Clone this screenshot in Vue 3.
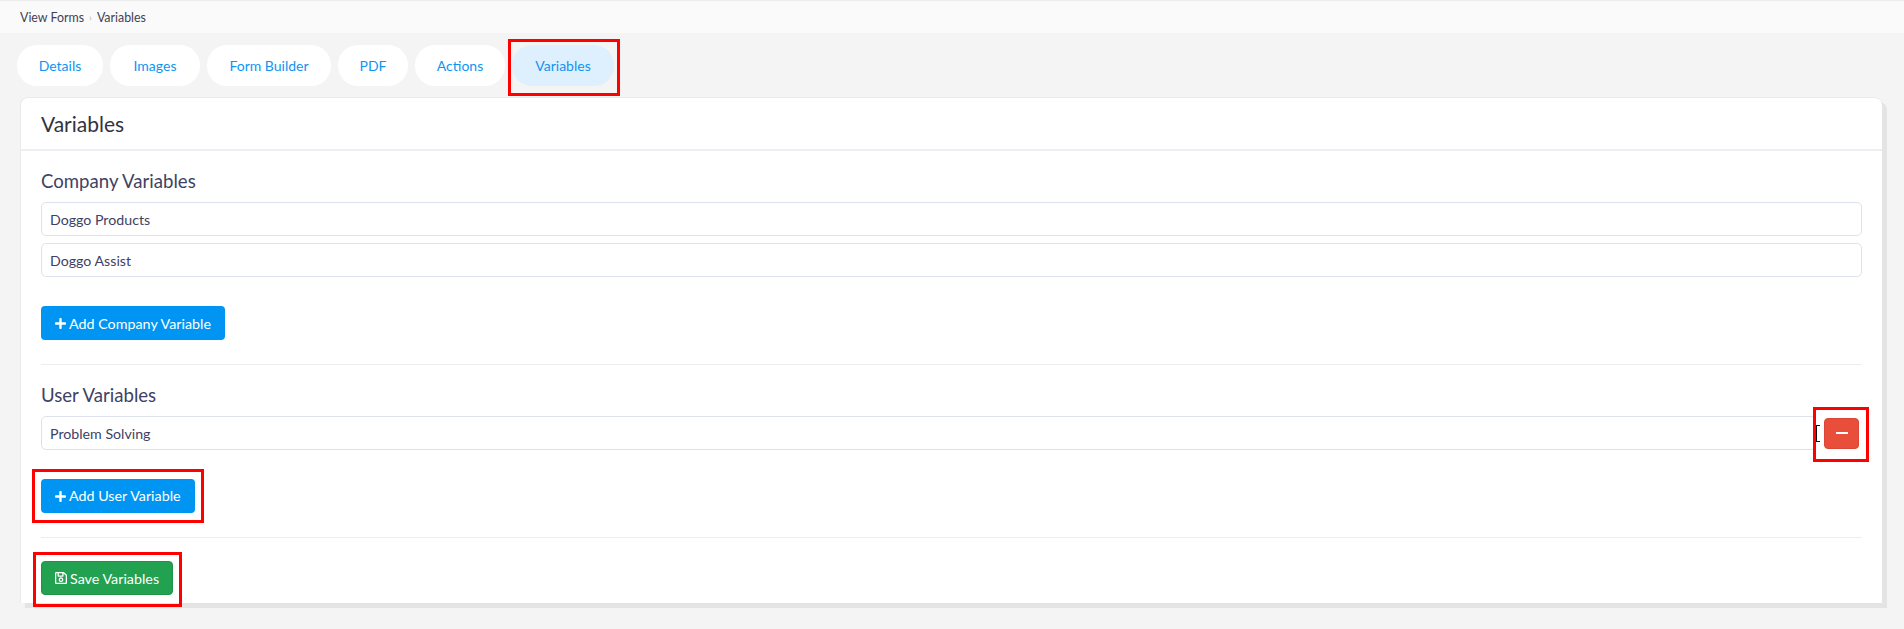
<template>
  <div class="page">
    <div class="crumbs">
      <span>View Forms</span>
      <span class="sep">›</span>
      <span>Variables</span>
    </div>

    <div class="tabs">
      <a
        v-for="tab in tabs"
        :key="tab"
        class="tab"
        :class="{ active: tab === 'Variables', marked: tab === 'Variables' }"
      >{{ tab }}</a>
    </div>

    <div class="card">
      <div class="card-head">Variables</div>
      <div class="card-body">
        <h5 class="group-title">Company Variables</h5>
        <div class="field" v-for="item in companyVars" :key="item">
          <div class="input">{{ item }}</div>
        </div>
        <button class="btn blue company-add">
          <svg class="ico" viewBox="0 32 448 448"><path d="M416 208H272V64c0-17.700-14.300-32-32-32h-32c-17.700 0-32 14.300-32 32v144H32c-17.700 0-32 14.300-32 32v32c0 17.700 14.300 32 32 32h144v144c0 17.700 14.300 32 32 32h32c17.700 0 32-14.300 32-32V304h144c17.700 0 32-14.300 32-32v-32c0-17.700-14.300-32-32-32z" /></svg>
          Add Company Variable
        </button>
        <hr class="rule first" />

        <h5 class="group-title">User Variables</h5>
        <div class="user-row">
          <div class="input grow">Problem Solving</div>
          <span class="remove-wrap marked">
            <span class="caret"></span>
            <button class="btn-remove"><span class="minus"></span></button>
          </span>
        </div>
        <div class="add-user">
          <span class="marked mark-add">
            <button class="btn blue">
              <svg class="ico" viewBox="0 32 448 448"><path d="M416 208H272V64c0-17.700-14.300-32-32-32h-32c-17.700 0-32 14.300-32 32v144H32c-17.700 0-32 14.300-32 32v32c0 17.700 14.300 32 32 32h144v144c0 17.700 14.300 32 32 32h32c17.700 0 32-14.300 32-32V304h144c17.700 0 32-14.300 32-32v-32c0-17.700-14.300-32-32-32z" /></svg>
              Add User Variable
            </button>
          </span>
        </div>
        <hr class="rule second" />

        <span class="marked mark-save">
          <button class="btn green">
            <svg class="ico save" viewBox="0 32 448 448"><path d="M433.900 129.900l-83.900-83.900A48 48 0 0 0 316.100 32H48C21.500 32 0 53.500 0 80v352c0 26.500 21.500 48 48 48h352c26.500 0 48-21.500 48-48V163.900a48 48 0 0 0-14.100-34zM272 80v80H144V80h128zm122 352H54a6 6 0 0 1-6-6V86a6 6 0 0 1 6-6h42v104c0 13.300 10.700 24 24 24h176c13.300 0 24-10.700 24-24V83.900l78.200 78.200a6 6 0 0 1 1.800 4.200V426a6 6 0 0 1-6 6zM224 232c-48.500 0-88 39.500-88 88s39.500 88 88 88 88-39.500 88-88-39.500-88-88-88zm0 128c-22.100 0-40-17.900-40-40s17.900-40 40-40 40 17.900 40 40-17.900 40-40 40z" /></svg>
            Save Variables
          </button>
        </span>
      </div>
    </div>
  </div>
</template>

<script setup>
const tabs = ['Details', 'Images', 'Form Builder', 'PDF', 'Actions', 'Variables']
const companyVars = ['Doggo Products', 'Doggo Assist']
</script>

<style>
body {
  background: #f4f4f4;
}
</style>

<style scoped>
.page {
  min-height: 629px;
  box-sizing: border-box;
  background: #f4f4f4;
  font-family: Lato, "Open Sans", sans-serif;
  color: #3e4265;
  font-size: 14px;
}

.crumbs {
  display: flex;
  align-items: center;
  gap: 5px;
  height: 32px;
  padding-left: 20px;
  background: #fafafa;
  border-top: 1px solid #ececec;
  font-size: 12.400px;
  color: #3f4254;
}

.sep {
  color: #b5b5c3;
  font-size: 10px;
}

.tabs {
  display: flex;
  gap: 7px;
  padding: 12px 0 0 17px;
}

.tab {
  display: flex;
  align-items: center;
  justify-content: center;
  height: 41px;
  border-radius: 20px;
  background: #fff;
  color: #0d95f3;
  font-size: 14px;
}

.tab:nth-child(1) { width: 86px; }
.tab:nth-child(2) { width: 90px; }
.tab:nth-child(3) { width: 124px; }
.tab:nth-child(4) { width: 70px; }
.tab:nth-child(5) { width: 90px; }
.tab:nth-child(6) { width: 102px; }

.tab.active {
  background: #def0fd;
}

.marked {
  position: relative;
}

.marked::after {
  content: "";
  position: absolute;
  border: 3px solid #f00;
  pointer-events: none;
}

.tab.marked::after {
  top: -6px;
  bottom: -10px;
  left: -4px;
  right: -6px;
}

.card {
  margin: 11px 22px 0 20px;
  background: #fff;
  border-top: 1px solid #eaeaea;
  border-left: 1px solid #eaeaea;
  border-radius: 8px 8px 0 0;
  box-shadow: 5px 5px 0 #e4e4e4;
}

.card-head {
  display: flex;
  align-items: center;
  height: 51px;
  padding-left: 20px;
  border-bottom: 2px solid #ebeff3;
  font-size: 21px;
  color: #33333f;
}

.card-body {
  padding: 19px 20px 8px;
}

.group-title {
  margin: 0 0 10px;
  font-size: 18.600px;
  font-weight: 400;
  line-height: 22px;
  color: #3e4265;
}

.field + .field {
  margin-top: 7px;
}

.input {
  box-sizing: border-box;
  height: 34px;
  padding-left: 8px;
  display: flex;
  align-items: center;
  background: #fff;
  border: 1px solid #dee2ec;
  border-radius: 5px;
  font-size: 14.200px;
  color: #3e4265;
}

.btn {
  display: inline-flex;
  align-items: center;
  gap: 3px;
  box-sizing: border-box;
  height: 34px;
  padding: 0 13px;
  border: 1px solid transparent;
  border-radius: 4px;
  color: #fff;
  font: inherit;
  font-size: 14.300px;
}

.btn.blue {
  background: #0095f2;
}

.btn.green {
  background: #22a150;
  border-color: #1f9449;
}

.ico {
  width: 11px;
  height: 11px;
  fill: currentColor;
}

.ico.save {
  width: 12px;
  height: 12px;
}

.company-add {
  margin-top: 29px;
}

.rule {
  margin: 0;
  border: 0;
  border-top: 1px solid #ebedf0;
}

.rule.first {
  margin: 24px 0 19px;
}

.rule.second {
  margin: 24px 0 23px;
}

.user-row {
  display: flex;
  align-items: center;
  padding-right: 3px;
}

.grow {
  flex: 1;
}

.caret {
  position: absolute;
  left: -8px;
  top: 7px;
  width: 4px;
  height: 17px;
  box-sizing: border-box;
  border: 1px solid #111;
  border-right: 0;
}

.remove-wrap {
  display: flex;
  margin-left: 8px;
}

.remove-wrap::after {
  top: -11px;
  bottom: -13px;
  left: -11px;
  right: -10px;
}

.btn-remove {
  display: flex;
  align-items: center;
  justify-content: center;
  width: 35px;
  height: 31px;
  padding: 0;
  background: #e84e3a;
  border: 1px solid #db4735;
  border-radius: 4px;
}

.minus {
  display: block;
  width: 12px;
  height: 2px;
  background: #fff;
}

.add-user {
  margin-top: 29px;
  line-height: 0;
}

.mark-add,
.mark-save {
  display: inline-flex;
}

.mark-add::after {
  top: -10px;
  bottom: -10px;
  left: -9px;
  right: -9px;
}

.mark-save::after {
  top: -9px;
  bottom: -12px;
  left: -8px;
  right: -9px;
}
</style>
